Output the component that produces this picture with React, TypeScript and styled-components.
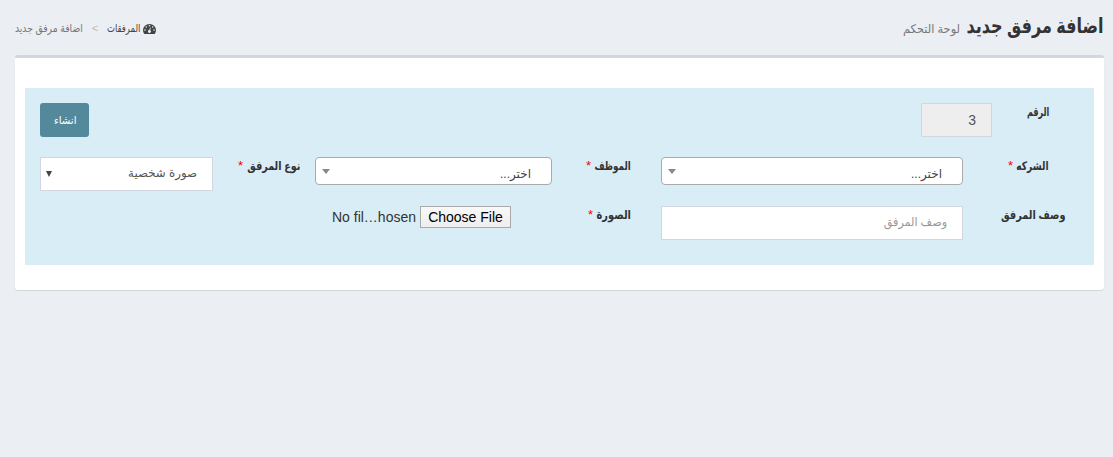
import React from 'react';
import styled, { createGlobalStyle } from 'styled-components';

const GlobalStyle = createGlobalStyle`
  * { box-sizing: border-box; }
  body {
    margin: 0;
    background: #ebeef3;
    color: #333;
    font-family: "Liberation Sans", "DejaVu Sans", sans-serif;
    font-size: 14px;
  }
`;

const Page = styled.main`
  direction: rtl;
  height: 457px;
  padding: 0 9px 0 15px;
  overflow: hidden;
`;

const Header = styled.header`
  display: flex;
  justify-content: space-between;
  height: 55px;
`;

const Slot = styled.span<{ $width: number }>`
  display: block;
  flex: none;
  width: ${(p) => p.$width}px;
`;

/* A line of text whose glyphs are condensed horizontally around its right edge. */
const Line = styled.span<{ $size: number; $squeeze: number }>`
  display: inline-block;
  font-size: ${(p) => p.$size}px;
  line-height: 20px;
  white-space: nowrap;
  transform: scaleX(${(p) => p.$squeeze});
  transform-origin: right center;
`;

const Title = styled.h1`
  display: flex;
  margin: 0;
  padding-top: 15px;
  font-size: 20px;
`;

const Subtitle = styled.small`
  margin: 3px 7px 0 0;
  color: #777;
  font-weight: 400;
`;

const Crumbs = styled.nav`
  display: flex;
  align-items: flex-start;
  padding-top: 18px;
  color: #777;
`;

const CrumbIcon = styled.svg`
  flex: none;
  width: 13px;
  height: 10px;
  margin: 6px 0 0 3px;
`;

const CrumbLink = styled.a`
  color: #444;
`;

const Separator = styled.span`
  width: 24px;
  color: #bbb;
  font-size: 11px;
  line-height: 20px;
  text-align: center;
`;

const Card = styled.section`
  height: 235px;
  padding: 30px 10px 0;
  border-top: 3px solid #d2d6de;
  border-radius: 3px;
  background: #fff;
  box-shadow: 0 1px 1px rgba(0, 0, 0, 0.1);
`;

const Panel = styled.div`
  display: flex;
  flex-direction: column;
  height: 177px;
  padding: 15px 0 0 15px;
  background: #d9edf7;
`;

const Row = styled.div<{ $gap: number }>`
  display: flex;
  align-items: flex-start;
  height: 34px;
  margin-bottom: ${(p) => p.$gap}px;
`;

const Label = styled.label<{ $width: number; $inset: number }>`
  display: flex;
  flex: none;
  width: ${(p) => p.$width}px;
  margin-top: -1px;
  padding-right: ${(p) => p.$inset}px;
  font-weight: 700;
`;

const Required = styled.span`
  margin-right: 4px;
  color: #f00;
  font-size: 13px;
  font-weight: 400;
  line-height: 20px;
`;

const Field = styled.div<{ $width: number; $disabled?: boolean; $muted?: boolean }>`
  display: flex;
  align-items: center;
  flex: none;
  width: ${(p) => p.$width}px;
  height: 34px;
  padding: 0 15px ${(p) => (p.$disabled ? 0 : 2)}px 5px;
  border: 1px solid #d2d6de;
  background: ${(p) => (p.$disabled ? '#eee' : '#fff')};
  color: ${(p) => (p.$muted ? '#999' : '#555')};
`;

const Chosen = styled.div<{ $width: number }>`
  display: flex;
  justify-content: space-between;
  flex: none;
  width: ${(p) => p.$width}px;
  height: 28px;
  padding: 6px 20px 0 6px;
  border: 1px solid #aaa;
  border-radius: 4px;
  background: #fff;
  color: #444;
`;

const Caret = styled.i`
  width: 0;
  height: 0;
  margin-top: 5px;
  border: 4px solid transparent;
  border-top: 5px solid #888;
  border-bottom: 0;
`;

const NativeArrow = styled.svg`
  width: 6px;
  height: 6px;
  margin-top: 1px;
  margin-right: auto;
`;

const FilePicker = styled.div`
  display: flex;
  flex: none;
  gap: 4px;
  margin-right: 41px;
  line-height: 22px;
`;

const FileButton = styled.button`
  width: 91px;
  height: 22px;
  padding: 0;
  border: 1px solid #a9a9a9;
  border-radius: 0;
  background: linear-gradient(#f8f8f8, #eee);
  color: #000;
  font: 14px "Liberation Sans", sans-serif;
`;

const Submit = styled.button`
  display: flex;
  align-items: center;
  width: 49px;
  height: 34px;
  margin-right: auto;
  padding: 0 13px 0 0;
  border: 0;
  border-radius: 3px;
  background: #54899c;
  color: #fff;
  font-family: inherit;
  text-align: right;
`;

type TextProps = { size?: number; width: number; squeeze?: number; children: React.ReactNode };

const Text = ({ size = 12, width, squeeze = 1, children }: TextProps) => (
  <Slot $width={width}>
    <Line $size={size} $squeeze={squeeze}>{children}</Line>
  </Slot>
);

export default function App() {
  return (
    <>
      <GlobalStyle />
      <Page>
        <Header>
          <Title>
            <Text size={21} width={137} squeeze={0.763}>اضافة مرفق جديد</Text>
            <Subtitle><Text size={12} width={58} squeeze={0.95}>لوحة التحكم</Text></Subtitle>
          </Title>
          <Crumbs>
            <CrumbIcon viewBox="0 0 13 11" preserveAspectRatio="none">
              <path d="M6.5 0A6.5 6.5 0 0 0 0 6.5c0 1.6.5 3.1 1.2 4.2.1.2.3.3.6.3h9.4c.3 0 .5-.1.6-.3.7-1.1 1.2-2.6 1.2-4.2A6.5 6.5 0 0 0 6.5 0Z" fill="#444" />
              <g fill="#ebeef3">
                <circle cx="2" cy="6.5" r=".8" />
                <circle cx="3.3" cy="3.3" r=".8" />
                <circle cx="6.5" cy="1.9" r=".8" />
                <circle cx="9.7" cy="3.3" r=".8" />
                <circle cx="11" cy="6.5" r=".8" />
                <path d="M7 4l.8.2-.6 2.7a1.5 1.5 0 1 1-.9-.2Z" />
              </g>
            </CrumbIcon>
            <CrumbLink><Text size={11} width={33} squeeze={0.77}>المرفقات</Text></CrumbLink>
            <Separator>&gt;</Separator>
            <Text size={11} width={68} squeeze={0.84}>اضافة مرفق جديد</Text>
          </Crumbs>
        </Header>
        <Card>
          <Panel>
            <Row $gap={20}>
              <Label $width={102} $inset={45}><Text width={22} squeeze={0.67}>الرقم</Text></Label>
              <Field $width={71} $disabled><Text size={14} width={8}>3</Text></Field>
              <Submit><Text size={11} width={23} squeeze={0.92}>انشاء</Text></Submit>
            </Row>
            <Row $gap={15}>
              <Label $width={131} $inset={45}><Text width={32} squeeze={0.76}>الشركه</Text><Required>*</Required></Label>
              <Chosen $width={302}><Text width={33}>اختر...</Text><Caret /></Chosen>
              <Label $width={109} $inset={30}><Text width={36} squeeze={0.73}>الموظف</Text><Required>*</Required></Label>
              <Chosen $width={237}><Text width={33}>اختر...</Text><Caret /></Chosen>
              <Label $width={102} $inset={15}><Text width={53} squeeze={0.8}>نوع المرفق</Text><Required>*</Required></Label>
              <Field $width={173}>
                <Text width={69} squeeze={0.985}>صورة شخصية</Text>
                <NativeArrow viewBox="0 0 6 6"><path d="M0 0h6L3 6Z" fill="#444" /></NativeArrow>
              </Field>
            </Row>
            <Row $gap={0}>
              <Label $width={131} $inset={29}><Text width={64} squeeze={0.81}>وصف المرفق</Text></Label>
              <Field $width={302} $muted><Text width={64} squeeze={0.93}>وصف المرفق</Text></Field>
              <Label $width={109} $inset={30}><Text width={34} squeeze={0.82}>الصورة</Text><Required>*</Required></Label>
              <FilePicker>
                <FileButton>Choose File</FileButton>
                <span dir="ltr">No fil…hosen</span>
              </FilePicker>
            </Row>
          </Panel>
        </Card>
      </Page>
    </>
  );
}
